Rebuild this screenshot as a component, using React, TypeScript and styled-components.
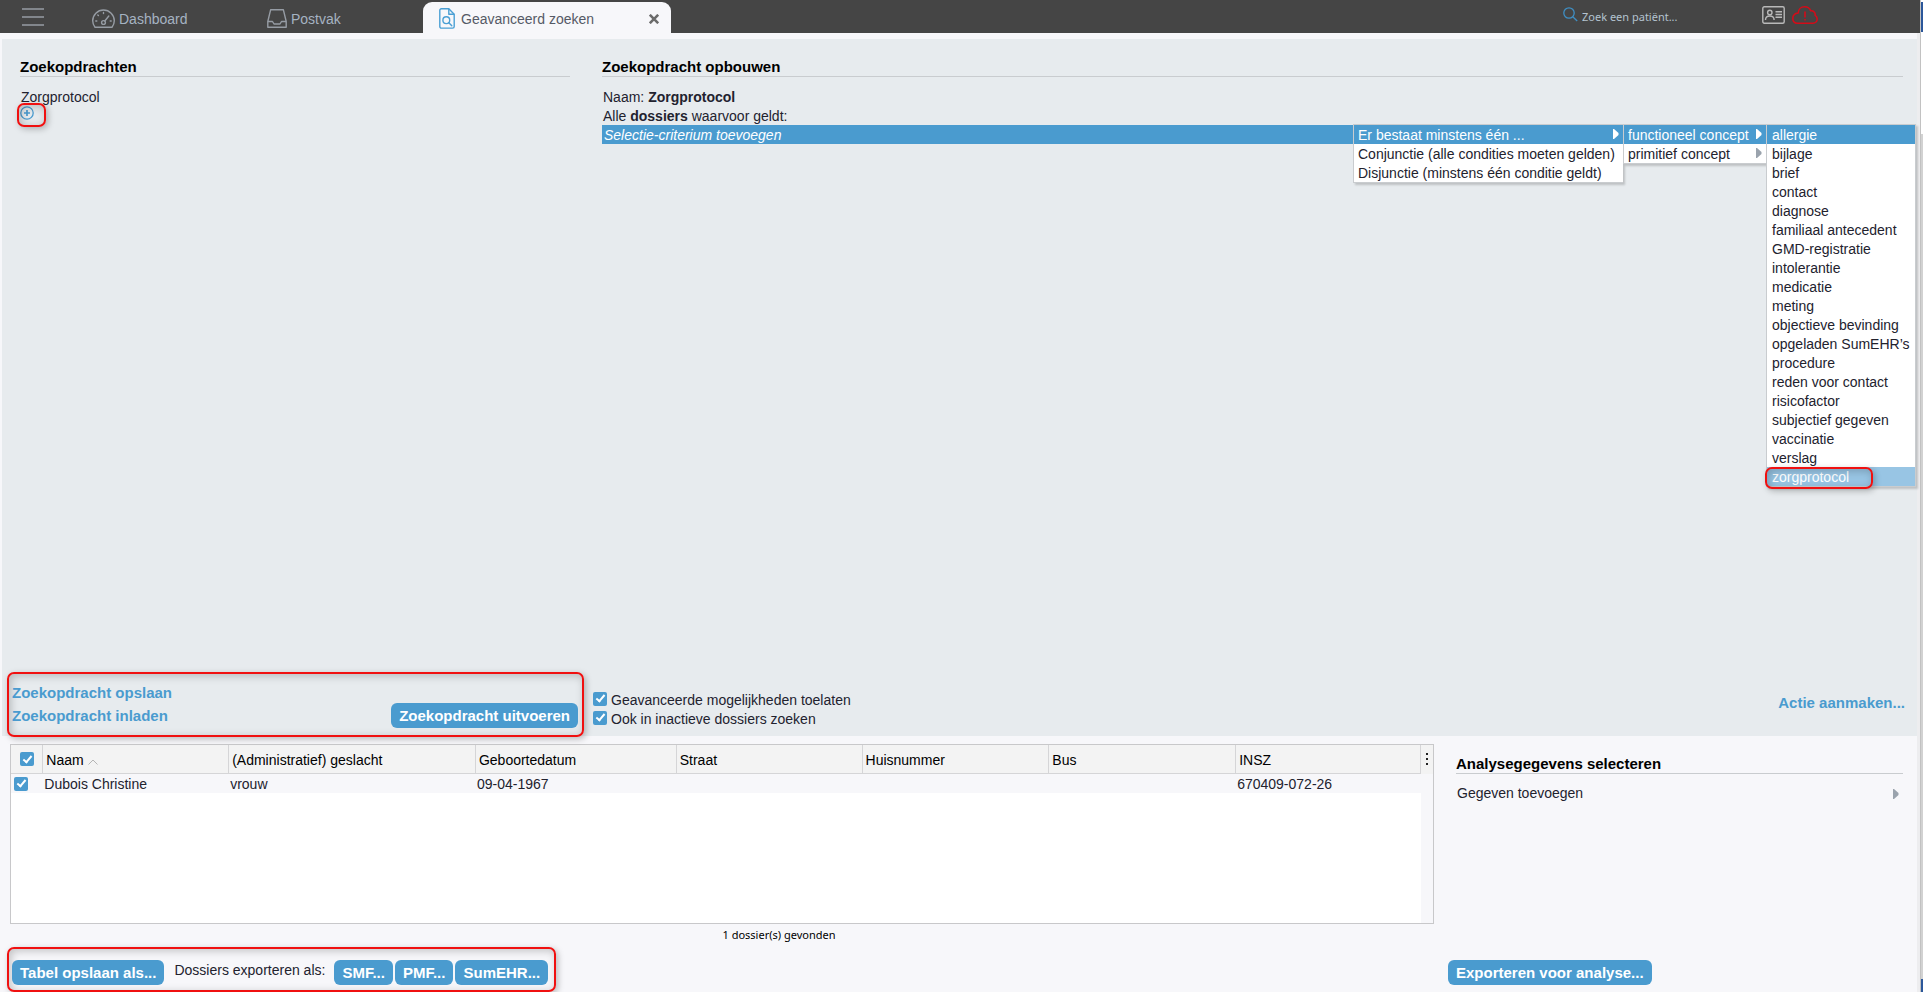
import React from 'react';
import styled, { createGlobalStyle, css } from 'styled-components';

const BLUE = '#4a9bcf';
const PANEL = '#e7ebee';
const PAPER = '#f7f7fa';
const LINE = '#c9cccf';

const GlobalStyle = createGlobalStyle`
  *, *::before, *::after { box-sizing: border-box; }
  body {
    margin: 0;
    background: ${PAPER};
    color: #22222e;
    font: 14px/19px "Liberation Sans", Arial, sans-serif;
  }
  button, input { font: inherit; color: inherit; }
  button { border: 0; padding: 0; background: none; cursor: pointer; text-align: left; }
  a { color: inherit; text-decoration: none; }
  h2, p, ul { margin: 0; padding: 0; }
  ul { list-style: none; }
`;

const Screen = styled.div`
  display: flex;
  min-height: 100vh;
`;

const Application = styled.div`
  flex: 1;
  min-width: 0;
  display: flex;
  flex-direction: column;
`;

const WindowEdge = styled.div`
  width: 3px;
  border-left: 1px solid #c2c2c2;
  background: linear-gradient(
    #fff 2px, #2b579a 2px 32px, #fff 32px 134px, #d2d2d2 134px calc(100% - 13px), #2b579a calc(100% - 13px)
  );
`;

const TopBar = styled.header`
  display: flex;
  height: 33px;
  background: #454545;
  color: #a5b3c2;
`;

const MenuButton = styled.button`
  width: 92px;
  padding-left: 22px;
  display: flex;
  align-items: center;
`;

const TabLabel = styled.span`
  padding-top: 2px;
`;

const NavTab = styled.a<{ $width: number }>`
  display: flex;
  align-items: center;
  gap: 4px;
  width: ${(p) => p.$width}px;
  padding-top: 4px;
`;

const ActiveTab = styled.div`
  display: flex;
  align-items: center;
  width: 248px;
  margin-top: 2px;
  padding: 2px 12px 0 16px;
  border-radius: 9px 9px 0 0;
  background: ${PAPER};
  color: #555a66;
  a { flex: 1; display: flex; align-items: center; gap: 6px; }
  button { display: flex; }
`;

const SearchField = styled.label`
  display: flex;
  align-items: center;
  gap: 4px;
  width: 199px;
  margin-left: auto;
  padding-bottom: 4px;
  input {
    width: 150px;
    height: 20px;
    margin-top: 4px;
    border: 0;
    padding: 0;
    outline: 0;
    background: none;
    font: 11px/20px "Noto Sans", sans-serif;
    &::placeholder { color: #b4c3d0; opacity: 1; }
  }
`;

const StatusIcons = styled.div`
  display: flex;
  gap: 7px;
  width: 158px;
  padding-top: 6px;
  button { display: flex; height: 18px; }
`;

const Body = styled.main`
  flex: 1;
  display: flex;
  flex-direction: column;
  padding-top: 6px;
  border-right: 3px solid #ededef;
`;

const QueryPanel = styled.section`
  flex: 1;
  display: flex;
  flex-direction: column;
  justify-content: space-between;
  margin-left: 2px;
  background: ${PANEL};
`;

const QueryColumns = styled.div`
  display: flex;
  gap: 32px;
  padding: 19px 14px 0 18px;
`;

const SavedQueries = styled.div`
  width: 550px;
`;

const QueryBuilder = styled.div`
  flex: 1;
  min-width: 0;
`;

const Heading = styled.h2`
  margin-bottom: 10px;
  border-bottom: 1px solid ${LINE};
  color: #000;
  font-size: 15px;
  line-height: 18px;
  font-weight: bold;
`;

const Line = styled.p`
  height: 19px;
  padding: 2px 0 0 1px;
  line-height: 17px;
`;

const outline = css`
  border: 2px solid #f01010;
  border-radius: 7px;
  box-shadow: 2px 2px 6px rgba(0, 0, 0, 0.25), inset 2px 2px 8px rgba(0, 0, 0, 0.22);
`;

const AddSpot = styled.div`
  position: relative;
  display: flex;
  height: 14px;
  button { display: flex; }
  &::after {
    content: "";
    position: absolute;
    left: -3px;
    top: -3px;
    width: 29px;
    height: 24px;
    pointer-events: none;
    ${outline}
  }
`;

const CriterionRow = styled.div`
  position: relative;
  margin-right: -13px;
  background: ${BLUE};
  color: #fff;
  > button {
    display: block;
    width: 100%;
    padding: 2px 0 0 2px;
    font-style: italic;
    line-height: 17px;
  }
`;

const Menus = styled.div`
  position: absolute;
  z-index: 2;
  top: -1px;
  right: 0;
  display: flex;
  align-items: flex-start;
`;

const Menu = styled.ul<{ $width: number }>`
  width: ${(p) => p.$width}px;
  border: 1px solid ${LINE};
  border-right-width: 0;
  background: #fff;
  color: #22222e;
  box-shadow: 2px 2px 2px rgba(0, 0, 0, 0.18);
  &:last-child { border-right-width: 1px; }
`;

const MenuItem = styled.li<{ $state?: 'open' | 'hover'; $indent: number }>`
  position: relative;
  height: 19px;
  background: ${(p) => (p.$state === 'open' ? BLUE : p.$state === 'hover' ? '#98c5e4' : 'transparent')};
  color: ${(p) => (p.$state ? '#fff' : 'inherit')};
  button {
    display: flex;
    justify-content: space-between;
    width: 100%;
    padding: 2px 4px 0 ${(p) => p.$indent}px;
    line-height: 17px;
    white-space: nowrap;
  }
  svg { margin-top: 2px; }
  ${(p) => p.$state === 'hover' && css`
    &::after {
      content: "";
      position: absolute;
      left: -2px;
      top: 0;
      width: 108px;
      height: 22px;
      pointer-events: none;
      ${outline}
    }
  `}
`;

const QueryActions = styled.div`
  position: relative;
  z-index: 1;
  display: flex;
  align-items: flex-end;
  gap: 9px;
  margin-bottom: -1px;
  padding: 0 12px 0 5px;
`;

const RunBox = styled.div`
  display: flex;
  justify-content: space-between;
  align-items: flex-end;
  width: 577px;
  height: 65px;
  padding: 0 4px 7px 3px;
  ${outline}
`;

const LinkList = styled.div`
  display: flex;
  flex-direction: column;
  padding-bottom: 1px;
`;

const TextLink = styled.button`
  color: ${BLUE};
  font-weight: bold;
  font-size: 15px;
  line-height: 23px;
`;

const PrimaryButton = styled.button`
  height: 25px;
  padding: 0 8px;
  border-radius: 6px;
  background: ${BLUE};
  color: #fff;
  font-weight: bold;
  font-size: 15px;
  line-height: 25px;
  white-space: nowrap;
`;

const Options = styled.div`
  flex: 1;
  padding-bottom: 8px;
`;

const Option = styled.label`
  display: flex;
  align-items: center;
  gap: 4px;
  width: max-content;
  input { margin-bottom: 4px; }
`;

const CheckBox = styled.input.attrs({ type: 'checkbox' })`
  appearance: none;
  display: grid;
  place-items: center;
  width: 14px;
  height: 14px;
  margin: 0;
  border-radius: 2px;
  background: ${BLUE};
  &:checked::after {
    content: "";
    width: 5px;
    height: 9px;
    margin-bottom: 2px;
    border: solid #fff;
    border-width: 0 2px 2px 0;
    transform: rotate(40deg);
  }
`;

const ActionLink = styled(TextLink)`
  align-self: center;
  margin-bottom: 4px;
`;

const Results = styled.section`
  display: flex;
  gap: 14px;
  padding: 8px 14px 0 7px;
`;

const ResultsColumn = styled.div`
  flex: 1;
  min-width: 0;
`;

const TableBox = styled.div`
  display: flex;
  height: 180px;
  margin-left: 3px;
  border: 1px solid #c8c8ca;
  background: #fff;
`;

const Table = styled.table`
  flex: 1;
  align-self: flex-start;
  table-layout: fixed;
  border-collapse: separate;
  border-spacing: 0;
  th {
    height: 29px;
    padding: 2px 0 0 3px;
    border-right: 1px solid #d5d5d7;
    border-bottom: 1px solid #d5d5d7;
    background: #f3f3f3;
    color: #000;
    font-weight: normal;
    text-align: left;
    white-space: nowrap;
  }
  th:first-child { padding: 0 0 0 9px; }
  td {
    height: 19px;
    padding: 2px 0 0 1px;
    background: ${PAPER};
    line-height: 17px;
    white-space: nowrap;
  }
  td:first-child { padding: 0 0 0 3px; }
  th svg { margin-left: 4px; }
`;

const TableMenu = styled.div`
  width: 12px;
  background: ${PAPER};
  button {
    display: flex;
    align-items: flex-start;
    width: 12px;
    height: 29px;
    padding: 8px 0 0 5px;
    background: #f3f3f3;
  }
`;

const Count = styled.p`
  margin: 1px 0 3px;
  padding-left: 117px;
  color: #000;
  font: 11px/19px "Noto Sans", sans-serif;
  text-align: center;
`;

const ExportBox = styled.div`
  display: flex;
  gap: 2px;
  width: 549px;
  height: 45px;
  padding: 11px 3px 0;
  ${outline}
`;

const ExportLabel = styled.span`
  width: 166px;
  padding-left: 8px;
  line-height: 21px;
`;

const AnalysisColumn = styled.aside`
  display: flex;
  flex-direction: column;
  justify-content: space-between;
  align-items: flex-start;
  width: 455px;
  padding: 11px 0 7px;
`;

const Analysis = styled.div`
  align-self: stretch;
  padding-left: 8px;
  > button {
    display: flex;
    justify-content: space-between;
    align-items: center;
    width: 100%;
    padding: 0 4px 0 1px;
  }
`;

const Arrow = ({ color = '#9aa3ad' }: { color?: string }) => (
  <svg width="6" height="10" viewBox="0 0 6 10" aria-hidden="true">
    <path d="M0 0h1l4.500 4v2L1 10H0z" fill={color} />
  </svg>
);

const DashboardIcon = () => (
  <svg width="23" height="19" viewBox="0 0 23 19" fill="none" stroke="#969ca4" strokeWidth="1.4" strokeLinecap="round">
    <path d="M3 18.2C1.500 16.300.700 14.200.700 11.800a10.800 10.800 0 0 1 21.600 0c0 2.400-.8 4.500-2.300 6.400z" strokeLinejoin="round" />
    <circle cx="11.500" cy="13.500" r="1.900" />
    <path d="M12.800 12l4-5M11.500 3.500v1M5.800 6l.6.600M3.800 12h1M18.200 12h1" />
  </svg>
);

const InboxIcon = () => (
  <svg width="20" height="19" viewBox="0 0 20 19" fill="none" stroke="#969ca4" strokeWidth="1.400" strokeLinejoin="round">
    <path d="M3.600.8h12.800l2.800 11.700v5.700H.8v-5.700z" />
    <path d="M.8 12.500h4.700l1.500 2.500h6l1.500-2.500h4.700" />
  </svg>
);

const DocumentSearchIcon = () => (
  <svg width="16" height="21" viewBox="0 0 16 21" fill="none" stroke="#4a9fd4" strokeWidth="1.400" strokeLinejoin="round">
    <path d="M2.500.8h7.300l5.400 5.400v12.300a1.600 1.600 0 0 1-1.600 1.600H2.500A1.600 1.600 0 0 1 .8 18.500V2.500A1.600 1.600 0 0 1 2.500.8z" />
    <path d="M9.800.8v5.400h5.400" />
    <circle cx="7.300" cy="12.200" r="3.400" />
    <path d="M9.800 14.700l3 3" strokeLinecap="round" />
  </svg>
);

const columns = [
  { title: 'Naam', width: '13.18%' },
  { title: '(Administratief) geslacht', width: '17.5%' },
  { title: 'Geboortedatum', width: '14.24%' },
  { title: 'Straat', width: '13.18%' },
  { title: 'Huisnummer', width: '13.25%' },
  { title: 'Bus', width: '13.25%' },
  { title: 'INSZ', width: '13.11%' },
];

const patient = ['Dubois Christine', 'vrouw', '09-04-1967', '', '', '', '670409-072-26'];

const concepts = [
  'allergie', 'bijlage', 'brief', 'contact', 'diagnose', 'familiaal antecedent', 'GMD-registratie',
  'intolerantie', 'medicatie', 'meting', 'objectieve bevinding', 'opgeladen SumEHR’s', 'procedure',
  'reden voor contact', 'risicofactor', 'subjectief gegeven', 'vaccinatie', 'verslag', 'zorgprotocol',
];

export default function App() {
  return (
    <Screen>
      <GlobalStyle />
      <Application>
        <TopBar>
          <MenuButton aria-label="Menu">
            <svg width="22" height="18" viewBox="0 0 22 18" stroke="#969ca4" strokeWidth="1.500">
              <path d="M0 1h22M0 9h22M0 17h22" />
            </svg>
          </MenuButton>
          <NavTab href="#dashboard" $width={175}><DashboardIcon /><TabLabel>Dashboard</TabLabel></NavTab>
          <NavTab href="#postvak" $width={156}><InboxIcon /><TabLabel>Postvak</TabLabel></NavTab>
          <ActiveTab>
            <a href="#zoeken" aria-current="page"><DocumentSearchIcon /><TabLabel>Geavanceerd zoeken</TabLabel></a>
            <button aria-label="Tabblad sluiten">
              <svg width="10" height="10" viewBox="0 0 10 10" stroke="#6b6b6b" strokeWidth="2.600">
                <path d="M.8.8l8.400 8.400M9.200.8L.8 9.200" />
              </svg>
            </button>
          </ActiveTab>
          <SearchField>
            <svg width="15" height="15" viewBox="0 0 15 15" fill="none" stroke="#3f8fc4" strokeWidth="1.300">
              <circle cx="6" cy="6" r="5.200" />
              <path d="M9.800 9.800l4.400 4.200" />
            </svg>
            <input type="text" placeholder="Zoek een patiënt..." aria-label="Zoek een patiënt" />
          </SearchField>
          <StatusIcons>
            <button aria-label="Identiteitskaart">
              <svg width="23" height="18" viewBox="0 0 23 18" fill="none" stroke="#b9b9b9" strokeWidth="1.400">
                <rect x=".8" y=".8" width="21.400" height="16.400" rx="1.500" />
                <circle cx="7.800" cy="6.500" r="2.200" />
                <path d="M3.500 14c0-3 1.800-4 4.300-4s4.300 1 4.300 4M13.500 5.700h6.500M13.500 8.500h6.500M13.500 11.300h6.500" />
              </svg>
            </button>
            <button aria-label="Geen verbinding">
              <svg width="26" height="18" viewBox="0 0 26 18" fill="none" stroke="#d40b18" strokeWidth="1.600" strokeLinejoin="round">
                <path d="M5 17.200h16c2.300 0 4.200-1.800 4.200-4.200 0-1.600-.8-2.900-2-3.600.4-2.600-1.600-4.900-4.600-4.600C17.800 2.400 15.400.8 12.600.8 9 .8 6.400 3.400 6.200 7 3 7.300.8 9.400.8 12.600c0 2.700 1.800 4.600 4.200 4.600z" />
                <path d="M13 5.500v6M13 13v1.500" />
              </svg>
            </button>
          </StatusIcons>
        </TopBar>

        <Body>
          <QueryPanel>
            <QueryColumns>
              <SavedQueries>
                <Heading>Zoekopdrachten</Heading>
                <Line>Zorgprotocol</Line>
                <AddSpot>
                  <button aria-label="Zoekopdracht toevoegen">
                    <svg width="14" height="14" viewBox="0 0 14 14" fill="none" stroke={BLUE} strokeWidth="1.300">
                      <circle cx="7" cy="7" r="6.200" />
                      <path d="M4 7h6M7 4v6" strokeWidth="1.700" />
                    </svg>
                  </button>
                </AddSpot>
              </SavedQueries>
              <QueryBuilder>
                <Heading>Zoekopdracht opbouwen</Heading>
                <Line>Naam: <b>Zorgprotocol</b></Line>
                <Line>Alle <b>dossiers</b> waarvoor geldt:</Line>
                <CriterionRow>
                  <button>Selectie-criterium toevoegen</button>
                  <Menus>
                    <Menu $width={270}>
                      <MenuItem $state="open" $indent={4}><button>Er bestaat minstens één ...<Arrow color="#fff" /></button></MenuItem>
                      <MenuItem $indent={4}><button>Conjunctie (alle condities moeten gelden)</button></MenuItem>
                      <MenuItem $indent={4}><button>Disjunctie (minstens één conditie geldt)</button></MenuItem>
                    </Menu>
                    <Menu $width={143}>
                      <MenuItem $state="open" $indent={4}><button>functioneel concept<Arrow color="#fff" /></button></MenuItem>
                      <MenuItem $indent={4}><button>primitief concept<Arrow /></button></MenuItem>
                    </Menu>
                    <Menu $width={150}>
                      {concepts.map((name, i) => (
                        <MenuItem
                          key={name}
                          $indent={5}
                          $state={i === 0 ? 'open' : i === concepts.length - 1 ? 'hover' : undefined}
                        >
                          <button>{name}</button>
                        </MenuItem>
                      ))}
                    </Menu>
                  </Menus>
                </CriterionRow>
              </QueryBuilder>
            </QueryColumns>

            <QueryActions>
              <RunBox>
                <LinkList>
                  <TextLink>Zoekopdracht opslaan</TextLink>
                  <TextLink>Zoekopdracht inladen</TextLink>
                </LinkList>
                <PrimaryButton>Zoekopdracht uitvoeren</PrimaryButton>
              </RunBox>
              <Options>
                <Option><CheckBox defaultChecked />Geavanceerde mogelijkheden toelaten</Option>
                <Option><CheckBox defaultChecked />Ook in inactieve dossiers zoeken</Option>
              </Options>
              <ActionLink>Actie aanmaken...</ActionLink>
            </QueryActions>
          </QueryPanel>

          <Results>
            <ResultsColumn>
              <TableBox>
                <Table>
                  <colgroup>
                    <col style={{ width: 31 }} />
                    {columns.map((c) => <col key={c.title} style={{ width: c.width }} />)}
                  </colgroup>
                  <thead>
                    <tr>
                      <th><CheckBox defaultChecked aria-label="Alles selecteren" /></th>
                      {columns.map((c, i) => (
                        <th key={c.title}>
                          {c.title}
                          {i === 0 && (
                            <svg width="10" height="6" viewBox="0 0 10 6" fill="none" stroke="#b5b5b5">
                              <path d="M.5 5.500L5 1l4.500 4.500" />
                            </svg>
                          )}
                        </th>
                      ))}
                    </tr>
                  </thead>
                  <tbody>
                    <tr>
                      <td><CheckBox defaultChecked aria-label="Dubois Christine selecteren" /></td>
                      {patient.map((value, i) => <td key={columns[i].title}>{value}</td>)}
                    </tr>
                  </tbody>
                </Table>
                <TableMenu>
                  <button aria-label="Kolommen kiezen">
                    <svg width="2" height="12" viewBox="0 0 2 12" fill="#222">
                      <path d="M0 0h2v2H0zM0 5h2v2H0zM0 10h2v2H0z" />
                    </svg>
                  </button>
                </TableMenu>
              </TableBox>
              <Count>1 dossier(s) gevonden</Count>
              <ExportBox>
                <PrimaryButton>Tabel opslaan als...</PrimaryButton>
                <ExportLabel>Dossiers exporteren als:</ExportLabel>
                <PrimaryButton>SMF...</PrimaryButton>
                <PrimaryButton>PMF...</PrimaryButton>
                <PrimaryButton>SumEHR...</PrimaryButton>
              </ExportBox>
            </ResultsColumn>
            <AnalysisColumn>
              <Analysis>
                <Heading>Analysegegevens selecteren</Heading>
                <button>Gegeven toevoegen<Arrow /></button>
              </Analysis>
              <PrimaryButton>Exporteren voor analyse...</PrimaryButton>
            </AnalysisColumn>
          </Results>
        </Body>
      </Application>
      <WindowEdge />
    </Screen>
  );
}
